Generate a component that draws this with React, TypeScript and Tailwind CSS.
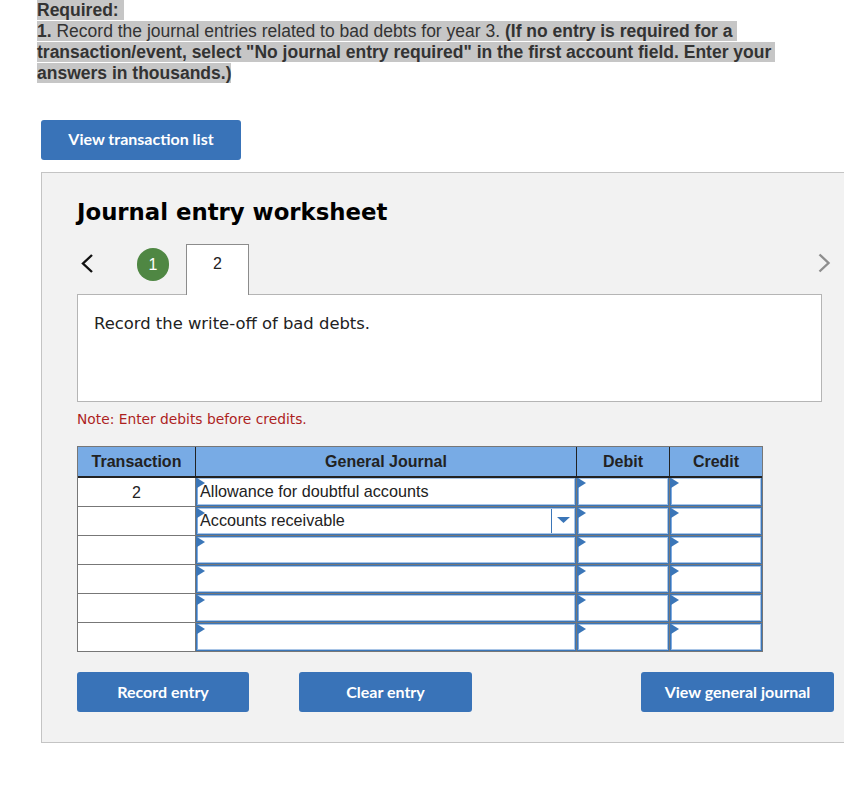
const rows = [
  { tx: "2", account: "Allowance for doubtful accounts", select: false },
  { tx: "", account: "Accounts receivable", select: true },
  { tx: "", account: "", select: false },
  { tx: "", account: "", select: false },
  { tx: "", account: "", select: false },
  { tx: "", account: "", select: false },
];

function BlueButton({ label, className }: { label: string; className: string }) {
  return (
    <button className={`h-10 rounded-[3px] bg-[#3973b8] font-['Lato'] text-[16px] font-bold text-white ${className}`}>
      {label}
    </button>
  );
}

// Input with the blue outline, pale inner line and the small corner flag
function InputCell({ first, children, border }: { first: boolean; children?: React.ReactNode; border: string }) {
  return (
    <div className={`border-b border-[#777] ${border}`}>
      <div className={`relative h-[28px] border-x border-b border-[#3b76b8] ${first ? "border-t-0" : "border-t"}`}>
        <div className="h-full border border-[#a9c5e6] border-l-[#7fabe0] bg-white">{children}</div>
        <svg className="absolute left-0 top-0" width="8" height="10" viewBox="0 0 8 10">
          <path d="M0 0L8 5L0 10Z" fill="#3b76b8" />
        </svg>
      </div>
    </div>
  );
}

export default function App() {
  return (
    <div className="h-[805px] w-[844px] overflow-hidden bg-white font-['Liberation_Sans',sans-serif]">
      {/* Question text, selected in the browser */}
      <div className="ml-[37px] text-[17.5px] leading-[21px] text-[#333]">
        <p>
          <span className="bg-[#c6c6c6] pr-[5px] font-bold">Required:</span>
        </p>
        <p>
          <span className="bg-[#c6c6c6] pr-[4px]">
            <b>1.</b> Record the journal entries related to bad debts for year 3.{" "}
            <b>(If no entry is required for a</b>
          </span>
        </p>
        <p>
          <span className="bg-[#c6c6c6] pr-[4px] font-bold">
            transaction/event, select "No journal entry required" in the first account field. Enter your
          </span>
        </p>
        <p>
          <span className="bg-[#c6c6c6] font-bold">answers in thousands.)</span>
        </p>
      </div>

      <BlueButton label="View transaction list" className="ml-[41px] mt-[36px] block w-[200px] pb-[2px]" />

      {/* Worksheet panel */}
      <div className="ml-[41px] mt-3 h-[571px] w-[830px] border border-[#c4c4c4] bg-[#f2f2f2] pl-[35px] pt-[24px]">
        <h2 className="font-['DejaVu_Sans',sans-serif] text-[22.8px] font-bold leading-[30px] text-black">
          Journal entry worksheet
        </h2>

        <div className="mt-[17px] flex h-[50px] w-[755px] items-start">
          <svg className="mt-[9px]" width="20" height="20" viewBox="0 0 20 20">
            <path d="M15 2L6 10.5L15 19" fill="none" stroke="#111" strokeWidth="2.4" />
          </svg>
          <div className="ml-[40px] mt-[4px] flex h-[33px] w-[32px] items-center justify-center rounded-full bg-[#4f8743] text-[16px] text-white">
            1
          </div>
          <div className="relative z-10 ml-[17px] flex h-[51px] w-[63px] justify-center border border-b-0 border-[#8c8c8c] bg-white pt-[10px] text-[16px] leading-[18px] text-[#222]">
            2
          </div>
          <svg className="ml-auto mt-[9px]" width="14" height="20" viewBox="0 0 14 20">
            <path d="M1.5 1.5L10.5 10L1.5 18.5" fill="none" stroke="#8e8e8e" strokeWidth="2.4" />
          </svg>
        </div>

        <div className="h-[108px] w-[745px] border border-[#b5b5b5] bg-white px-4 pt-[19px] font-['DejaVu_Sans',sans-serif] text-[16.4px] leading-[20px] text-[#222]">
          Record the write-off of bad debts.
        </div>

        <p className="mt-2 font-['DejaVu_Sans',sans-serif] text-[13.8px] leading-[18px] text-[#ad1f1f]">
          Note: Enter debits before credits.
        </p>

        {/* Journal table */}
        <div className="mt-[18px] grid w-[686px] grid-cols-[118px_381px_93px_92px] border-l border-r border-t border-[#777] bg-white text-[16px] text-[#222]">
          <div className="flex h-[31px] items-center justify-center border-b-2 border-r border-[#222] bg-[#78abe5] font-bold">Transaction</div>
          <div className="flex h-[31px] items-center justify-center border-b-2 border-r border-[#222] bg-[#78abe5] font-bold">General Journal</div>
          <div className="flex h-[31px] items-center justify-center border-b-2 border-r border-[#222] bg-[#78abe5] font-bold">Debit</div>
          <div className="flex h-[31px] items-center justify-center border-b-2 border-[#222] bg-[#78abe5] font-bold">Credit</div>
          {rows.map((row, i) => (
            <div key={i} className="contents">
              <div className="flex h-[29px] items-center justify-center border-b border-r border-[#777] pt-px">{row.tx}</div>
              <InputCell first={i === 0} border="border-r">
                <div className="flex h-full">
                  <span className={`grow pl-[2px] text-[16.2px] leading-[20px] ${i === 0 ? "pt-[2px]" : "pt-px"}`}>{row.account}</span>
                  {row.select && (
                    <span className="flex w-[23px] items-center justify-center border-l border-[#3b76b8] pb-[3px]">
                      <svg width="13" height="6" viewBox="0 0 13 6">
                        <path d="M0 0H13L6.5 6Z" fill="#3b76b8" />
                      </svg>
                    </span>
                  )}
                </div>
              </InputCell>
              <InputCell first={i === 0} border="border-r" />
              <InputCell first={i === 0} border="" />
            </div>
          ))}
        </div>

        <div className="mt-5 flex w-[757px]">
          <BlueButton label="Record entry" className="w-[172px]" />
          <BlueButton label="Clear entry" className="ml-[50px] w-[173px]" />
          <BlueButton label="View general journal" className="ml-auto w-[193px]" />
        </div>
      </div>
    </div>
  );
}
